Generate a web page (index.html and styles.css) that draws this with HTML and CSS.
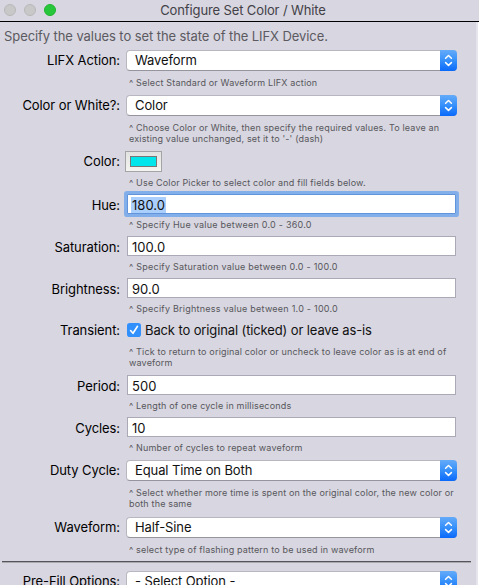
FILE: index.html
```html
<!DOCTYPE html>
<html lang="en">
<head>
<meta charset="utf-8">
<title>Configure Set Color / White</title>
<link rel="stylesheet" href="styles.css">
</head>
<body>
<svg class="defs" width="0" height="0"><defs>
<symbol id="arrows" viewBox="0 0 17 21"><path d="M5.6 8.3 8.5 5.5l2.9 2.8M5.6 12.6l2.9 2.8 2.9-2.8" fill="none" stroke="#fff" stroke-width="1.5" stroke-linecap="round" stroke-linejoin="round"/></symbol>
</defs></svg>
<div class="window">
<header class="titlebar">
<div class="lights"><i></i><i></i><i class="green"></i></div>
<h1>Configure Set Color / White</h1>
</header>
<main class="sheet">
<p class="intro"><span>Specify the values to set the state of the LIFX Device.</span></p>
<div class="row r45"><label>LIFX Action:</label><div class="field"><div class="select"><span>Waveform</span><svg><use href="#arrows"/></svg></div><p class="hint">^ Select Standard or Waveform LIFX action</p></div></div>
<div class="row r56"><label>Color or White?:</label><div class="field"><div class="select"><span>Color</span><svg><use href="#arrows"/></svg></div><p class="hint">^ Choose Color or White, then specify the required values. To leave an<br>existing value unchanged, set it to '-' (dash)</p></div></div>
<div class="row r43"><label>Color:</label><div class="field"><div class="well"><i></i></div><p class="hint near">^ Use Color Picker to select color and fill fields below.</p></div></div>
<div class="row r42 text"><label>Hue:</label><div class="field"><div class="input focus"><span>180.0</span></div><p class="hint range">^ Specify Hue value between 0.0 - 360.0</p></div></div>
<div class="row r42 text"><label>Saturation:</label><div class="field"><div class="input"><span>100.0</span></div><p class="hint range">^ Specify Saturation value between 0.0 - 100.0</p></div></div>
<div class="row r45 text"><label>Brightness:</label><div class="field"><div class="input"><span>90.0</span></div><p class="hint range">^ Specify Brightness value between 1.0 - 100.0</p></div></div>
<div class="row r52 tick"><label>Transient:</label><div class="field"><div class="check"><svg width="14" height="14" viewBox="0 0 14 14"><rect width="14" height="14" rx="2.8" fill="#3290fc"/><path d="M3.6 7.5 6 10.3l4.5-7" fill="none" stroke="#fff" stroke-width="1.6" stroke-linecap="round" stroke-linejoin="round"/></svg><span>Back to original (ticked) or leave as-is</span></div><p class="hint">^ Tick to return to original color or uncheck to leave color as is at end of<br>waveform</p></div></div>
<div class="row r42 text"><label>Period:</label><div class="field"><div class="input"><span>500</span></div><p class="hint">^ Length of one cycle in milliseconds</p></div></div>
<div class="row r43 text"><label>Cycles:</label><div class="field"><div class="input"><span>10</span></div><p class="hint">^ Number of cycles to repeat waveform</p></div></div>
<div class="row r57"><label>Duty Cycle:</label><div class="field"><div class="select"><span>Equal Time on Both</span><svg><use href="#arrows"/></svg></div><p class="hint">^ Select whether more time is spent on the original color, the new color or<br>both the same</p></div></div>
<div class="row r44"><label>Waveform:</label><div class="field"><div class="select"><span>Half-Sine</span><svg><use href="#arrows"/></svg></div><p class="hint">^ select type of flashing pattern to be used in waveform</p></div></div>
<hr>
<div class="row"><label>Pre-Fill Options:</label><div class="field"><div class="select"><span>- Select Option -</span><svg><use href="#arrows"/></svg></div></div></div>
</main>
</div>
</body>
</html>
```
FILE: styles.css
```css
* { box-sizing: border-box; }
body { margin: 0; background: #d8d6e0; color: #111; font: 13px/16px Inter, "Liberation Sans", sans-serif; letter-spacing: -0.08px; overflow: hidden; }
.defs { display: block; }
.window { height: 585px; overflow: hidden; }
.titlebar { display: grid; grid-template-columns: 54px 1fr 54px; align-items: center; height: 22px; border-bottom: 1px solid #000; }
.lights { display: flex; gap: 8px; padding: 0 0 1px 4px; }
.lights i { flex: none; width: 12px; height: 12px; border-radius: 50%; background: #c9c8c8; border: 1px solid #b8b7b9; }
.lights .green { background: #28c73b; border-color: #1eb52d; }
h1 { margin: 0; padding: 0 0 1px 7px; font-size: 13px; font-weight: 400; line-height: 19px; letter-spacing: -0.12px; text-align: center; color: #424147; white-space: nowrap; }
.sheet { height: 563px; margin-right: 1px; border-right: 2px solid #e6e4ec; box-shadow: 1px 0 #fff; }
.intro { margin: 0; padding: 6px 0 0 4px; height: 28px; color: #5b5a60; white-space: nowrap; }
.row { display: grid; grid-template-columns: 120px 330px; column-gap: 6px; align-items: start; height: 30px; }
.r42 { height: 42px; }
.r43 { height: 43px; }
.r44 { height: 44px; }
.r45 { height: 45px; }
.r52 { height: 52px; }
.r56 { height: 56px; }
.r57 { height: 57px; }
label { padding-top: 2px; text-align: right; white-space: nowrap; color: #000; }
.text label { padding-top: 3px; }
.select { display: flex; width: 331px; height: 21px; border: 1px solid #b8b7c0; border-bottom-color: #96959e; border-radius: 4px; background: #fff; }
.select span { flex: 1; padding: 1px 0 0 8px; white-space: nowrap; letter-spacing: -0.1px; }
.select svg { flex: none; width: 17px; height: 21px; margin: -1px -1px 0 0; border-radius: 0 4px 4px 0; background: linear-gradient(#64abf9, #3690fb 50%, #0a69fb); }
.hint { margin: 6px 0 0 3px; font-size: 9px; line-height: 11px; letter-spacing: 0.165px; color: #57565c; white-space: nowrap; }
.hint.near { margin-top: 5px; }
.hint.range { letter-spacing: 0.24px; }
.well { display: flex; align-items: center; justify-content: center; width: 37px; height: 21px; margin-left: -1px; border: 1px solid #a4a3a6; background: linear-gradient(#e2e2e0, #f4f4f1); }
.well i { width: 27px; height: 11px; border: 1px solid #777; background: #00e6eb; }
.input { width: 329px; height: 20px; margin-left: 1px; border: 1px solid #aaa9b5; background: #fff; padding: 2px 0 0 3px; letter-spacing: 0.05px; }
.input span { display: inline-block; height: 16px; padding: 0 1px; }
.focus { border-color: #6294dc; box-shadow: 0 0 0 3px #82aeea; border-radius: 1px; }
.focus span { background: #abcffc; }
.text .hint { margin-top: 5px; }
.tick .hint { margin-top: 9px; }
.tick label { padding-top: 0; margin-top: -1px; }
.check { display: flex; gap: 4px; height: 14px; margin-left: 1px; white-space: nowrap; letter-spacing: -0.12px; }
.check svg { flex: none; }
.check span { margin-top: -1px; }
hr { width: 469px; height: 1px; margin: 0 0 9px; margin-left: 2px; border: 0; background: #55545a; box-shadow: 0 1px #aaa9ae; }
```
